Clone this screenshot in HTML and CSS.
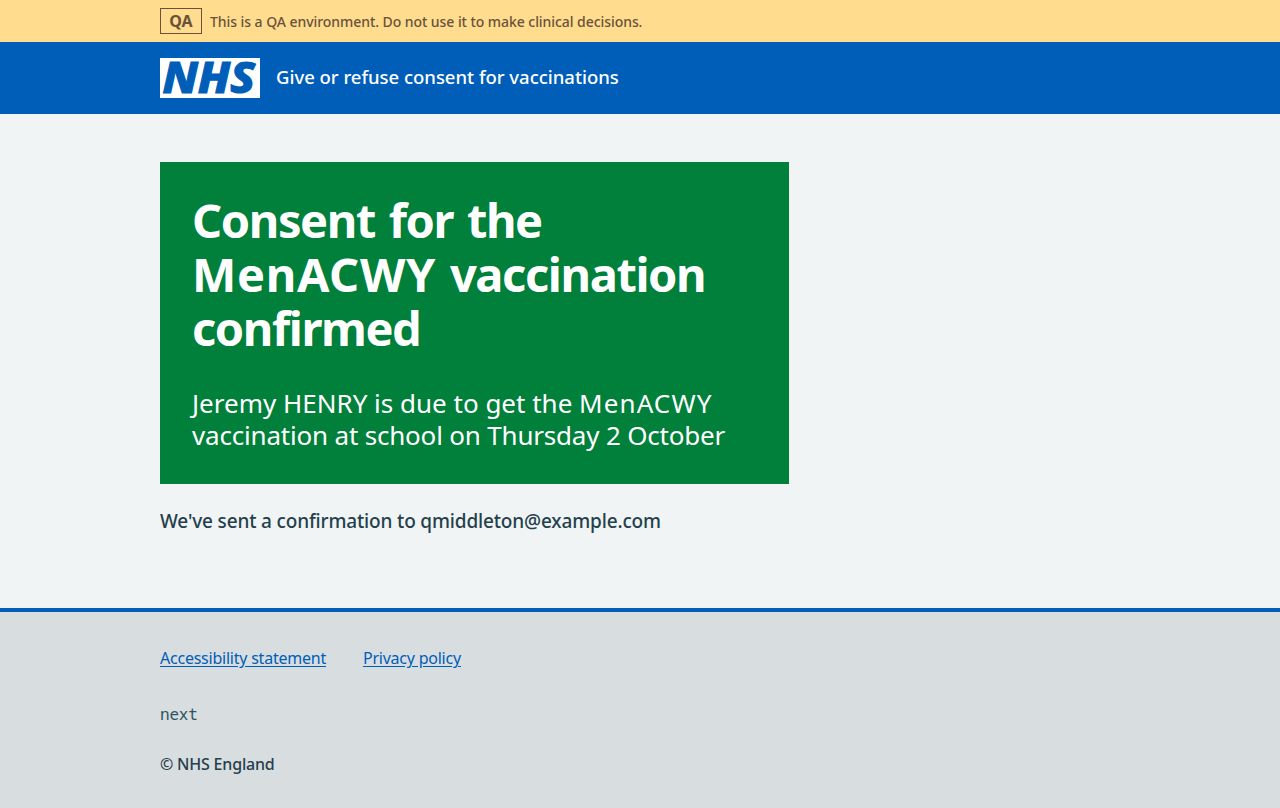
FILE: index.html
```html
<!DOCTYPE html>
<html lang="en">
<head>
<meta charset="utf-8">
<title>Give or refuse consent for vaccinations</title>
<link rel="stylesheet" href="styles.css">
</head>
<body>
<div class="environment">
  <div class="container environment-inner">
    <strong class="tag"><span>QA</span></strong>
    <span class="environment-text">This is a QA environment. Do not use it to make clinical decisions.</span>
  </div>
</div>
<header class="header">
  <div class="container header-inner">
    <svg class="logo" width="100" height="40" viewBox="0 0 100 40" role="img" aria-label="NHS">
      <rect width="100" height="40" fill="#fff"/>
      <text class="logo-text" x="2.4" y="35.4" textLength="92.4" lengthAdjust="spacingAndGlyphs">NHS</text>
    </svg>
    <span class="service">Give or refuse consent for vaccinations</span>
  </div>
</header>
<main class="container main">
  <div class="panel">
    <h1 class="title"><span class="title-text">Consent for the</span><br><span class="title-text"><span class="title-vaccine">MenACWY</span> vaccination</span><br><span class="title-text">confirmed</span></h1>
    <div class="panel-body"><span class="body-first">Jeremy HENRY is due to get the <span class="body-vaccine">MenACWY</span></span><br><span class="body-second">vaccination at school on Thursday 2 October</span></div>
  </div>
  <p class="sent"><span>We've sent a confirmation to qmiddleton@example.com</span></p>
</main>
<footer class="footer">
  <div class="container">
    <nav class="links"><a href="#">Accessibility statement</a><a href="#">Privacy policy</a></nav>
    <p class="version">next</p>
    <p class="copyright"><span>© NHS England</span></p>
  </div>
</footer>
</body>
</html>
```
FILE: styles.css
```css
* { box-sizing: border-box; }
body {
  margin: 0;
  min-height: 808px;
  display: flex;
  flex-direction: column;
  background: #f0f4f5;
  color: #25404b;
  font-family: "Noto Sans", "Open Sans", sans-serif;
}
.container { width: 960px; margin: 0 auto; white-space: nowrap; }
.environment { height: 42px; background: #ffdc8e; color: #69523b; }
.environment-inner { display: flex; align-items: center; gap: 8px; height: 42px; }
.tag {
  width: 42px;
  height: 26px;
  border: 1px solid #69523b;
  font-size: 16px;
  line-height: 24px;
  font-weight: 700;
  text-align: center;
}
.environment-text { padding-top: 2px; font-size: 14px; line-height: 24px; font-weight: 500; letter-spacing: -0.06px; }
.header { height: 72px; background: #005eb8; color: #fff; }
.header-inner { display: flex; align-items: center; gap: 16px; height: 72px; }
.logo { display: block; flex: none; overflow: visible; }
.logo-text {
  fill: #005eb8;
  stroke: #005eb8;
  stroke-width: 1.2px;
  font-size: 43.5px;
  font-weight: 800;
  font-style: italic;
}
.service { padding-bottom: 2px; font-size: 18.5px; line-height: 28px; font-weight: 500; letter-spacing: -0.02px; }
.main { flex: none; height: 494px; padding-top: 48px; }
.panel { width: 629px; height: 322px; padding: 31px 32px 33px; background: #00803a; color: #fff; }
.title { margin: 0 0 32px; font-size: 47px; line-height: 54px; font-weight: 700; }
.title-text { letter-spacing: -1.4px; word-spacing: 3px; }
.title-vaccine { letter-spacing: 0.65px; }
.panel-body { font-size: 26px; line-height: 32px; }
.body-first { letter-spacing: 0; }
.body-vaccine { letter-spacing: 1.1px; }
.body-second { letter-spacing: -0.19px; }
.sent { margin: 23px 0 0; font-size: 19px; line-height: 28px; font-weight: 500; letter-spacing: -0.16px; }
.footer { flex: 1; border-top: 4px solid #005eb8; background: #d8dde0; }
.links { display: flex; gap: 37px; padding-top: 34px; font-size: 16px; line-height: 24px; letter-spacing: -0.23px; }
.links a { color: #005eb8; text-underline-offset: 2px; }
.version { margin: 32px 0 0; color: #2c5560; font-family: "Noto Sans Mono", "DejaVu Sans Mono", monospace; font-size: 16px; line-height: 24px; letter-spacing: -0.2px; }
.copyright { margin: 26px 0 0; font-size: 16px; line-height: 24px; font-weight: 500; letter-spacing: -0.2px; }
```
